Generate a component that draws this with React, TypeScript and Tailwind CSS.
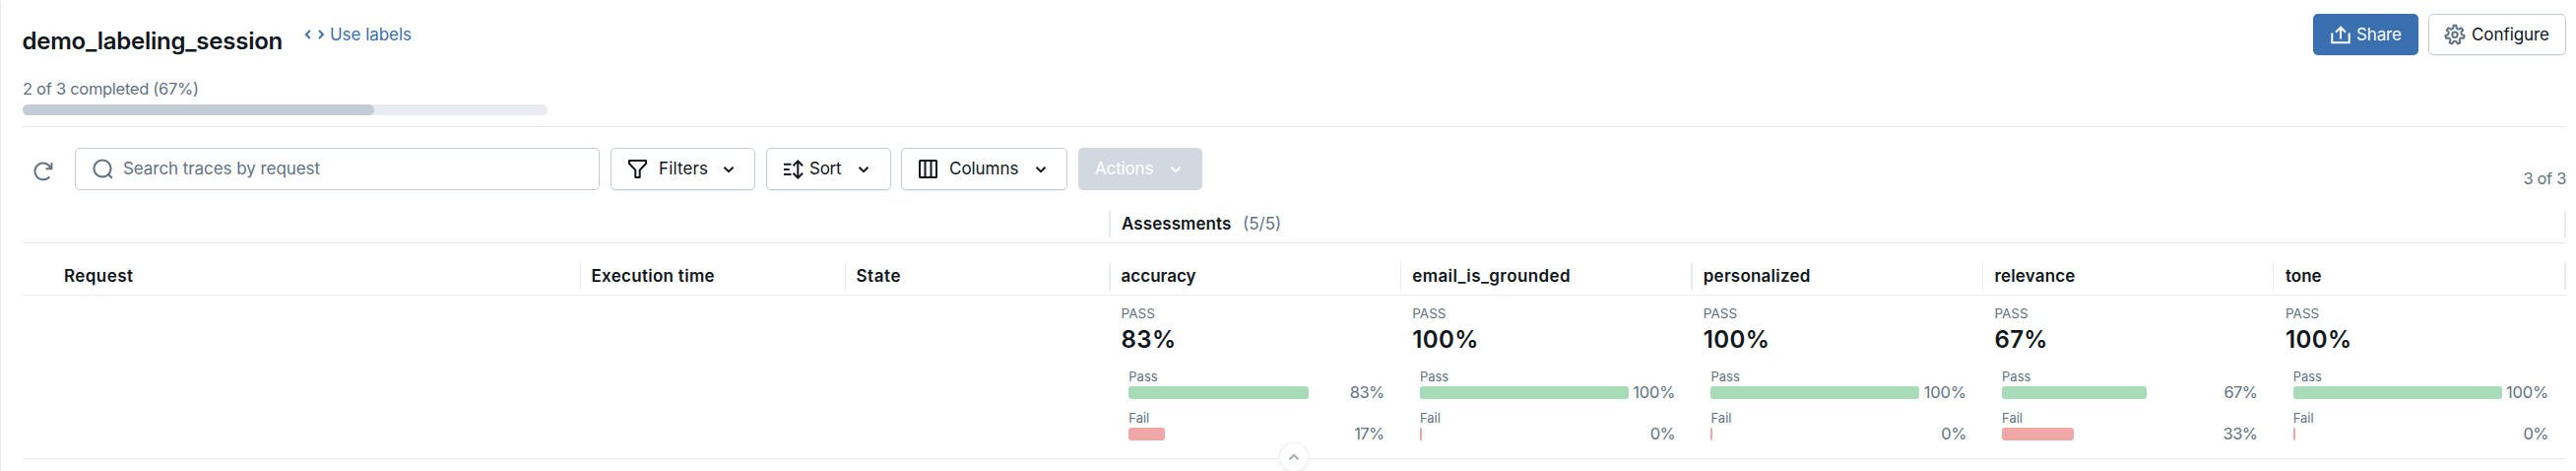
import type { ReactNode } from "react";

type Metric = { name: string; pass: number; tracking: string };

const METRICS: Metric[] = [
  { name: "accuracy", pass: 83, tracking: "tracking-[0.01px]" },
  { name: "email_is_grounded", pass: 100, tracking: "tracking-[0.42px]" },
  { name: "personalized", pass: 100, tracking: "tracking-[0.22px]" },
  { name: "relevance", pass: 67, tracking: "tracking-[0.18px]" },
  { name: "tone", pass: 100, tracking: "tracking-[0px]" },
];

const DIVIDERS = ["w-[2px]", "w-px", "w-[2px]", "w-px", "w-px"];

function Icon({ w, h, className = "", children }: { w: number; h: number; className?: string; children: ReactNode }) {
  return (
    <svg
      width={w}
      height={h}
      viewBox={`0 0 ${w} ${h}`}
      fill="none"
      stroke="currentColor"
      strokeWidth={2}
      className={`block shrink-0 ${className}`}
    >
      {children}
    </svg>
  );
}

const CodeIcon = () => (
  <Icon w={24} h={12}>
    <path d="M7.800 1.900 3.900 6l3.900 4.100M17 1.900 20.900 6 17 10.100" />
  </Icon>
);

const ShareIcon = () => (
  <Icon w={20} h={19}>
    <path d="M1.300 7.500V17.300H18.700V7.500M10 13.500V2M5 6.700 10 1.700l5 5" />
  </Icon>
);

const RefreshIcon = () => (
  <Icon w={20} h={20}>
    <path d="M17.700 7A8.400 8.400 0 1 0 16.300 15.300" />
    <path d="M18.400 1.200V7.300H12.600" />
  </Icon>
);

const SearchIcon = () => (
  <Icon w={21} h={21}>
    <circle cx="10" cy="10" r="8.600" />
    <path d="m15.800 15.800 4 4" />
  </Icon>
);

const FilterIcon = () => (
  <Icon w={19} h={19}>
    <path strokeLinejoin="round" d="M1 1H18V4L11.700 10.600V18H7.300V10.600L1 4Z" />
  </Icon>
);

const SortIcon = () => (
  <Icon w={20} h={20}>
    <path d="M0 4.700H7.500M0 10H5.800M0 15H7.500M14.300 2V18M9.500 6.200 14.300 1.400l4.800 4.800M9.500 13.800l4.800 4.800 4.800-4.800" />
  </Icon>
);

const ColumnsIcon = () => (
  <Icon w={19} h={19}>
    <rect x="1" y="1" width="17" height="17" rx="0.500" />
    <path d="M6.500 1V18M12.500 1V18" />
  </Icon>
);

const Chevron = ({ up = false, className = "" }: { up?: boolean; className?: string }) => (
  <Icon w={12} h={8} className={className}>
    <path d={up ? "M1.500 6.200 6 1.800l4.500 4.400" : "M1.500 1.700 6 6.200l4.500-4.500"} />
  </Icon>
);

function gearPath(teeth: number, cx: number, cy: number) {
  const step = (Math.PI * 2) / teeth;
  const at = (r: number, a: number) => `${(cx + r * Math.cos(a)).toFixed(2)} ${(cy + r * Math.sin(a)).toFixed(2)}`;
  let d = "";
  for (let i = 0; i < teeth; i++) {
    const a = -Math.PI / 2 + i * step;
    d += `${i ? "L" : "M"}${at(7, a - 0.25)}L${at(9.6, a - 0.15)}L${at(9.6, a + 0.15)}L${at(7, a + 0.25)}`;
    d += `Q${at(6.2, a + step / 2)} ${at(7, a + step - 0.25)}`;
  }
  return `${d}Z`;
}

const GearIcon = () => (
  <Icon w={22} h={22} className="text-[#5f7281]">
    <path strokeLinejoin="round" d={gearPath(7, 11, 11.3)} />
    <circle cx="11" cy="11.300" r="2.700" />
  </Icon>
);

function MetricBar({ label, value, color }: { label: string; value: number; color: string }) {
  const width = value === 100 ? 212 : Math.max(2, Math.round(value * 2.2));
  return (
    <div className="h-[42px]">
      <div className="h-[18px] text-[13px] leading-4">{label}</div>
      <div className="flex h-[13px] items-center">
        <div className={`h-[13px] ${value ? "rounded-[3px]" : "rounded-[1px]"} ${color}`} style={{ width }} />
        <div className={`ml-auto pb-[2px] text-[16.5px] leading-[22px] ${value === 100 ? "tracking-[-0.2px]" : "tracking-[-0.6px]"}`}>
          {`${value}%`}
        </div>
      </div>
    </div>
  );
}

export default function App() {
  const outlined = "flex items-center rounded-[5px] border border-[#c0cdd8] shadow-[0_1px_1px_rgba(0,0,0,0.06)]";
  return (
    <div className="relative h-[478px] w-[2616px] overflow-hidden bg-white pt-px font-['Inter',sans-serif] text-[17px] text-[#11171c]">
      <div className="h-[477px] border-l border-[#e8ecf0] pl-[22px] pr-[10px]">
        <header className="flex h-32 justify-between border-b border-[#e4e9ee]">
          <div className="pt-[24px]">
            <div className="flex h-8">
              <h1 className="-ml-px w-[285px] pl-[0.5px] pt-px text-[24px] font-semibold leading-8 tracking-[-0.24px]">demo_labeling_session</h1>
              <a className="flex h-5 items-center gap-1 text-[#3a6fb0]">
                <CodeIcon />
                <span className="leading-5 tracking-[-0.04px]">Use labels</span>
              </a>
            </div>
            <div className="mt-[23px] text-[16.5px] leading-5 tracking-[-0.29px] text-[#5f7281]">2 of 3 completed (67%)</div>
            <div className="mt-[6px] h-[11px] w-[533px] rounded-full bg-[#e8ecf0]">
              <div className="h-full w-[67%] rounded-full bg-[#c3ccd6]" />
            </div>
          </div>
          <div className="flex h-[55px] gap-[10px] pt-[13px]">
            <button className="flex h-[42px] w-[107px] items-center gap-[6px] rounded-[5px] bg-[#3a6fb0] pl-[18px] text-white shadow-[0_1px_1px_rgba(0,0,0,0.06)]">
              <ShareIcon />
              <span className="pt-px tracking-[-0.15px]">Share</span>
            </button>
            <button className={`${outlined} h-[42px] w-[140px] gap-[6px] pl-[15px]`}>
              <GearIcon />
              <span className="pt-px tracking-[-0.08px]">Configure</span>
            </button>
          </div>
        </header>

        <div className="flex h-[77px] items-start pt-[21px]">
          <div className="flex h-[43px] w-[53px] items-center pl-[11px] pt-[4px] text-[#5f7281]">
            <RefreshIcon />
          </div>
          <div className="mr-[11px] flex h-[43px] w-[533px] items-center gap-[10px] rounded-[5px] border border-[#c0cdd8] pl-[17px] text-[#5f7281]">
            <SearchIcon />
            <span className="tracking-[-0.06px]">Search traces by request</span>
          </div>
          <button className={`${outlined} mr-[11px] h-[43px] w-[147px] pl-[17px]`}>
            <FilterIcon />
            <span className="ml-[12px] tracking-[0.12px]">Filters</span>
            <Chevron className="ml-[15px] mt-px" />
          </button>
          <button className={`${outlined} mr-[10px] h-[43px] w-[127px] pl-[17px]`}>
            <SortIcon />
            <span className="ml-[6px] tracking-[-0.25px]">Sort</span>
            <Chevron className="ml-[16.5px] mt-px" />
          </button>
          <button className={`${outlined} mr-[11px] h-[43px] w-[169px] pl-[17px]`}>
            <ColumnsIcon />
            <span className="ml-[12px] tracking-[-0.04px]">Columns</span>
            <Chevron className="ml-[16.5px] mt-px" />
          </button>
          <button className="flex h-[43px] w-[126px] items-center rounded-[5px] bg-[#d2d8e0] pl-[17px] text-white">
            <span className="tracking-[-0.14px]">Actions</span>
            <Chevron className="ml-[16.5px] mt-px" />
          </button>
          <div className="ml-auto self-start pt-[19px] text-[16.5px] leading-6 tracking-[-0.35px] text-[#5f7281]">3 of 3</div>
        </div>

        <div className="flex h-[41px] border-b border-[#e8ecf0] pt-[8px]">
          <div className="w-[1103px]" />
          <div className="h-[27px] w-[2px] bg-[#e8ecf0]" />
          <div className="flex flex-1 items-center pl-[11px]">
            <span className="-mt-[4px] font-semibold tracking-[0.07px]">Assessments</span>
            <span className="-mt-[4px] ml-[11.7px] text-[#5f7281]">(5/5)</span>
          </div>
          <div className="h-[27px] w-[2px] bg-[#e8ecf0]" />
        </div>

        <div className="flex h-[53px] border-b border-[#e8ecf0] pt-5 font-semibold leading-[26px]">
          <div className="w-[566px] pl-[42px] tracking-[0.44px]">Request</div>
          <div className="flex w-[269px]">
            <div className="h-[27px] w-px bg-[#e8ecf0]" />
            <span className="pl-[10.5px] tracking-[0.29px]">Execution time</span>
          </div>
          <div className="flex w-[268px]">
            <div className="h-[27px] w-px bg-[#e8ecf0]" />
            <span className="pl-[10.5px] tracking-[0.56px]">State</span>
          </div>
          {METRICS.map((m, i) => (
            <div key={m.name} className="flex w-[295.6px]">
              <div className="w-[12.6px]">
                <div className={`h-[27px] bg-[#e8ecf0] ${DIVIDERS[i]}`} />
              </div>
              <span className={m.tracking}>{m.name}</span>
            </div>
          ))}
          <div className="h-[27px] w-[2px] bg-[#e8ecf0]" />
        </div>

        <div className="relative flex h-[166px] border-b border-[#e8ecf0] pl-[1103px] text-[#5f7281]">
          {METRICS.map((m) => (
            <div key={m.name} className="w-[295.6px] pl-[12.6px] pt-[10px]">
              <div className="h-[17px] text-[13.5px] leading-4">PASS</div>
              <div className="h-[33px] text-[24px] font-semibold leading-[36px] tracking-[0.4px] text-[#11171c]">{`${m.pass}%`}</div>
              <div className="w-[267px] pl-[7.7px] pt-[14px]">
                <MetricBar label="Pass" value={m.pass} color="bg-[#a8dbb7]" />
                <MetricBar label="Fail" value={100 - m.pass} color="bg-[#efa8a5]" />
              </div>
            </div>
          ))}
          <div className="absolute left-[1275px] top-[148px] flex size-8 items-center justify-center rounded-full bg-white">
            <div className="flex size-[28px] items-center justify-center rounded-full bg-white text-[#a3aeb8] shadow-[0_0_3px_rgba(0,0,0,0.12),0_2px_8px_rgba(0,0,0,0.05)]">
              <Chevron up />
            </div>
          </div>
        </div>
      </div>
    </div>
  );
}
